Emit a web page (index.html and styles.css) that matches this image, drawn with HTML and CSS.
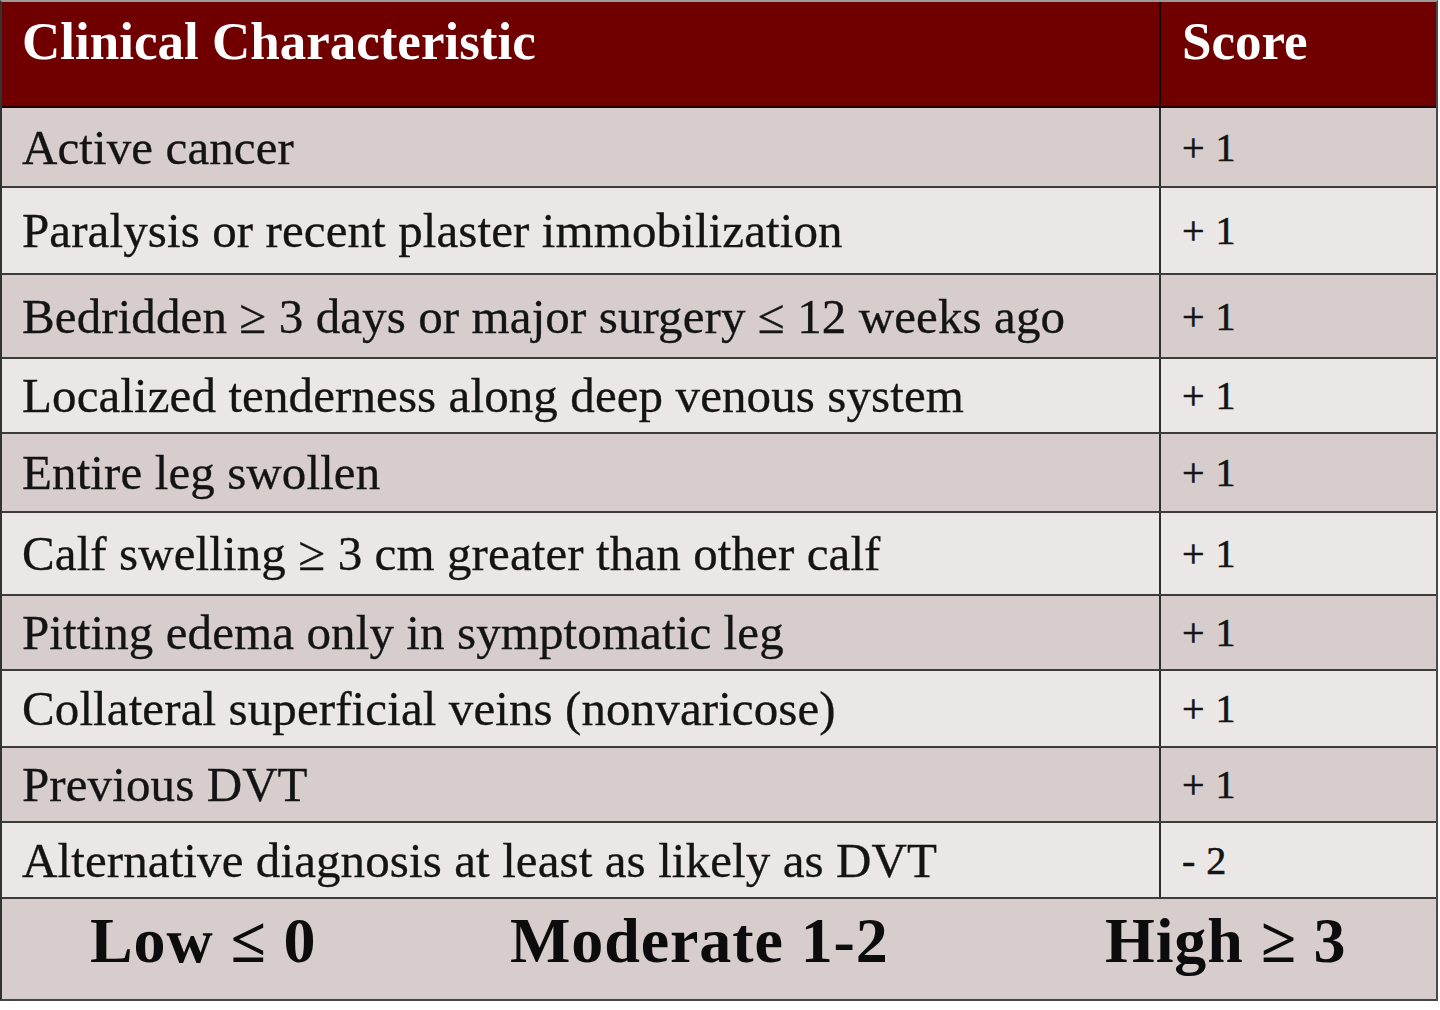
FILE: index.html
```html
<!DOCTYPE html>
<html lang="en">
<head>
<meta charset="utf-8">
<title>Wells Score for DVT</title>
<link rel="stylesheet" href="styles.css">
</head>
<body>
<div class="wells">
  <div class="row head">
    <div class="cell char"><span>Clinical Characteristic</span></div>
    <div class="cell score"><span>Score</span></div>
  </div>
  <div class="row dark r1"><div class="cell char"><span>Active cancer</span></div><div class="cell score"><span>+ 1</span></div></div>
  <div class="row light r2"><div class="cell char"><span>Paralysis or recent plaster immobilization</span></div><div class="cell score"><span>+ 1</span></div></div>
  <div class="row dark r3"><div class="cell char"><span>Bedridden ≥ 3 days or major surgery ≤ 12 weeks ago</span></div><div class="cell score"><span>+ 1</span></div></div>
  <div class="row light r4"><div class="cell char"><span>Localized tenderness along deep venous system</span></div><div class="cell score"><span>+ 1</span></div></div>
  <div class="row dark r5"><div class="cell char"><span>Entire leg swollen</span></div><div class="cell score"><span>+ 1</span></div></div>
  <div class="row light r6"><div class="cell char"><span>Calf swelling ≥ 3 cm greater than other calf</span></div><div class="cell score"><span>+ 1</span></div></div>
  <div class="row dark r7"><div class="cell char"><span>Pitting edema only in symptomatic leg</span></div><div class="cell score"><span>+ 1</span></div></div>
  <div class="row light r8"><div class="cell char"><span>Collateral superficial veins (nonvaricose)</span></div><div class="cell score"><span>+ 1</span></div></div>
  <div class="row dark r9"><div class="cell char"><span>Previous DVT</span></div><div class="cell score"><span>+ 1</span></div></div>
  <div class="row light r10"><div class="cell char"><span>Alternative diagnosis at least as likely as DVT</span></div><div class="cell score"><span>- 2</span></div></div>
  <div class="foot">
    <span class="risk">Low ≤ 0</span>
    <span class="risk">Moderate 1-2</span>
    <span class="risk">High ≥ 3</span>
  </div>
</div>
</body>
</html>
```

FILE: styles.css
```css
html, body {
  margin: 0;
  padding: 0;
  background: #ffffff;
}

body {
  font-family: "Liberation Serif", "Times New Roman", serif;
  color: #141414;
}

.wells {
  width: 1434px;
  border-left: 2px solid #333333;
  border-right: 2px solid #4a4a4a;
  border-top: 2px solid #9a9a9a;
  border-bottom: 2px solid #444444;
}

.row {
  display: grid;
  grid-template-columns: 1159px 1fr;
  border-bottom: 2px solid #3c3c3c;
}

.cell {
  display: flex;
  align-items: center;
  white-space: nowrap;
}

.cell.char {
  border-right: 2px solid #2e2e2e;
  padding-left: 20px;
  font-size: 49px;
  letter-spacing: 0.1px;
  -webkit-text-stroke: 0.3px #141414;
}

.cell.score {
  padding-left: 21px;
  font-size: 40px;
  letter-spacing: 0.5px;
  -webkit-text-stroke: 0.6px #141414;
}

.head {
  height: 104px;
  background: #700000;
  color: #ffffff;
  border-bottom-color: #1e0000;
}

.head .cell {
  align-items: flex-start;
  padding-top: 9px;
  font-weight: 700;
  font-size: 53px;
  letter-spacing: 0;
  -webkit-text-stroke: 0;
}

.head .cell.char {
  border-right-color: #140000;
}

.dark { background: #d6cdcc; }
.light { background: #ebe7e6; }

.r1 { height: 78px; }
.r2 { height: 85px; }
.r3 { height: 82px; }
.r4 { height: 73px; }
.r5 { height: 77px; }
.r6 { height: 81px; }
.r7 { height: 73px; }
.r8 { height: 75px; }
.r9 { height: 73px; }
.r10 { height: 74px; }

.foot {
  height: 100px;
  box-sizing: border-box;
  background: #d6cdcc;
  display: grid;
  grid-template-columns: 420px 595px 1fr;
  align-items: center;
  padding-left: 88px;
  padding-bottom: 16px;
  font-weight: 700;
  font-size: 64px;
  letter-spacing: 0.9px;
  color: #0c0c0c;
  white-space: nowrap;
}
```
